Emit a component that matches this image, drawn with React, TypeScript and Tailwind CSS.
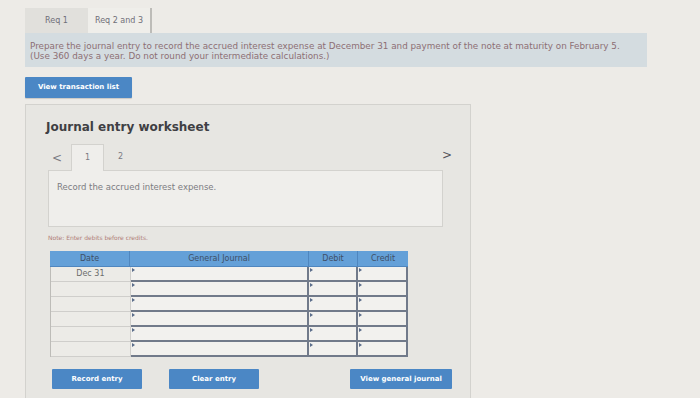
import React from "react";

const font = { fontFamily: '"DejaVu Sans", Verdana, sans-serif' };

function Row({ date }: { date?: string }) {
  return (
    <div className="flex h-[15px]">
      <div className="w-[80px] border-b border-r border-[#cfcecb] bg-[#ecebe7] text-center text-[8px] leading-[14px] text-[#6b6b6b]">
        {date}
      </div>
      <div className="relative w-[179px] border-b-2 border-r-2 border-[#717a8a] bg-[#f2f1ee]">
        <span className="absolute left-[1px] top-[1px] h-0 w-0 border-y-[2px] border-l-[3px] border-y-transparent border-l-[#5a6c8a]" />
      </div>
      <div className="relative w-[49px] border-b-2 border-r-2 border-[#717a8a] bg-[#f2f1ee]">
        <span className="absolute left-[1px] top-[1px] h-0 w-0 border-y-[2px] border-l-[3px] border-y-transparent border-l-[#5a6c8a]" />
      </div>
      <div className="relative w-[50px] border-b-2 border-r-2 border-[#717a8a] bg-[#f2f1ee]">
        <span className="absolute left-[1px] top-[1px] h-0 w-0 border-y-[2px] border-l-[3px] border-y-transparent border-l-[#5a6c8a]" />
      </div>
    </div>
  );
}

export default function App() {
  return (
    <div style={font} className="h-[398px] w-[700px] overflow-hidden bg-[#edebe7] pl-[25px]">
      {/* requirement tabs */}
      <div className="flex h-[33px] pt-[8px]">
        <div className="flex w-[63px] items-center justify-center bg-[#e1e0dc] text-[8px] text-[#6f6f78]">Req 1</div>
        <div className="flex w-[64px] items-center justify-center border-r-2 border-[#bdbcb8] bg-[#efeeea] text-[8px] text-[#6f6f78]">
          Req 2 and 3
        </div>
      </div>

      <div className="h-[34px] w-[622px] bg-[#d4dce0] px-[5px] pt-[8px] text-[8.8px] leading-[10px] text-[#8d6f74]">
        <p>Prepare the journal entry to record the accrued interest expense at December 31 and payment of the note at maturity on February 5.</p>
        <p>(Use 360 days a year. Do not round your intermediate calculations.)</p>
      </div>

      <button className="mt-[10px] h-[21px] w-[107px] rounded-[1px] bg-[#4b87c5] text-[7px] font-bold text-white shadow-[0_1px_1px_rgba(0,0,0,0.15)]">
        View transaction list
      </button>

      {/* worksheet panel */}
      <div className="mt-[6px] h-[300px] w-[446px] border border-[#d3d2ce] bg-[#e7e6e2] pl-[22px] pr-[26px]">
        <h2 className="ml-[-2px] pt-[14px] text-[12px] font-bold leading-[16px] text-[#3f3f44]">Journal entry worksheet</h2>

        <div className="mt-[9px] flex h-[26px] items-end">
          <span className="mb-[6px] ml-[4px] w-[19px] text-[12px] leading-none text-[#7a7a82]">&lt;</span>
          <div className="-mb-px flex h-[27px] w-[33px] items-center justify-center border border-b-0 border-[#d3d2ce] bg-[#efeeeb] text-[8px] text-[#7a7a82]">
            1
          </div>
          <span className="mb-[7px] ml-[14px] text-[8px] text-[#7a7a82]">2</span>
          <span className="mb-[9px] ml-auto mr-[-8px] text-[12px] leading-none text-[#55555c]">&gt;</span>
        </div>

        <div className="h-[57px] w-[395px] border border-[#d3d2ce] bg-[#efeeeb] pl-[8px] pt-[10px] text-[8.5px] text-[#7c7c82]">
          Record the accrued interest expense.
        </div>

        <p className="mt-[6px] text-[6px] text-[#b07e78]">Note: Enter debits before credits.</p>

        <div className="ml-[2px] mt-[9px] w-[358px]">
          <div className="flex h-[16px] border-b border-[#4f86bf] bg-[#64a0d8] text-[8px] leading-[15px] text-[#3f4f66]">
            <div className="w-[80px] border-r border-[#4f86bf] text-center">Date</div>
            <div className="w-[179px] border-r border-[#4f86bf] text-center">General Journal</div>
            <div className="w-[49px] border-r border-[#4f86bf] text-center">Debit</div>
            <div className="w-[50px] text-center">Credit</div>
          </div>
          <div className="border-l border-[#bdbcb8]">
            <Row date="Dec 31" />
            <Row />
            <Row />
            <Row />
            <Row />
            <Row />
          </div>
        </div>

        <div className="mt-[12px] flex w-[404px] text-[7px] font-bold text-white">
          <button className="ml-[4px] h-[20px] w-[90px] rounded-[1px] bg-[#4b87c5]">Record entry</button>
          <button className="ml-[27px] h-[20px] w-[90px] rounded-[1px] bg-[#4b87c5]">Clear entry</button>
          <button className="ml-auto h-[20px] w-[102px] rounded-[1px] bg-[#4b87c5]">View general journal</button>
        </div>
      </div>
    </div>
  );
}
